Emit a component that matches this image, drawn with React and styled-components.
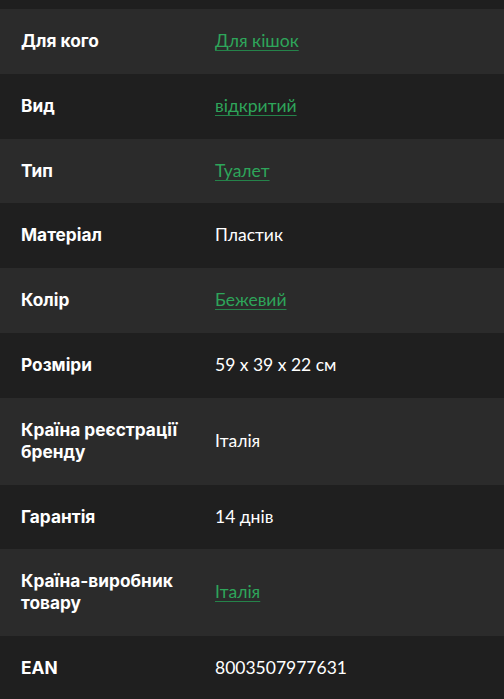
import styled, { createGlobalStyle } from "styled-components";

const Global = createGlobalStyle`
  html, body {
    margin: 0;
    padding: 0;
    background: #1f1f1f;
  }
  body {
    font-family: "Lato", "Noto Sans", sans-serif;
    -webkit-font-smoothing: antialiased;
  }
`;

const Table = styled.div`
  display: flex;
  flex-direction: column;
  padding-top: 9px;
  background: #1f1f1f;
`;

const Row = styled.div`
  display: grid;
  grid-template-columns: 194px 1fr;
  align-items: center;
  padding: 21px 21px 21.8px;
  min-height: 22px;
  background: ${(p) => (p.$odd ? "#2b2b2b" : "#1f1f1f")};
`;

const Label = styled.div`
  padding-right: 6px;
  color: #ffffff;
  font-family: "Inter", "Lato", sans-serif;
  font-size: 17.3px;
  line-height: 22px;
  font-weight: 700;
`;

const Value = styled.div`
  color: #ffffff;
  font-size: 17.5px;
  line-height: 22px;
  font-weight: 400;
`;

const Link = styled.a`
  color: #2ea55a;
  text-decoration: underline;
  text-decoration-color: #25834a;
  text-underline-offset: 3px;
  text-decoration-thickness: 1px;
`;

const specs = [
  { label: "Для кого", value: "Для кішок", link: true },
  { label: "Вид", value: "відкритий", link: true },
  { label: "Тип", value: "Туалет", link: true },
  { label: "Матеріал", value: "Пластик" },
  { label: "Колір", value: "Бежевий", link: true },
  { label: "Розміри", value: "59 x 39 x 22 см" },
  { label: "Країна реєстрації бренду", value: "Італія" },
  { label: "Гарантія", value: "14 днів" },
  { label: "Країна-виробник товару", value: "Італія", link: true },
  { label: "EAN", value: "8003507977631" },
];

export default function App() {
  return (
    <>
      <Global />
      <Table>
        {specs.map((s, i) => (
          <Row key={s.label} $odd={i % 2 === 0}>
            <Label>{s.label}</Label>
            <Value>{s.link ? <Link href="#">{s.value}</Link> : s.value}</Value>
          </Row>
        ))}
      </Table>
    </>
  );
}
